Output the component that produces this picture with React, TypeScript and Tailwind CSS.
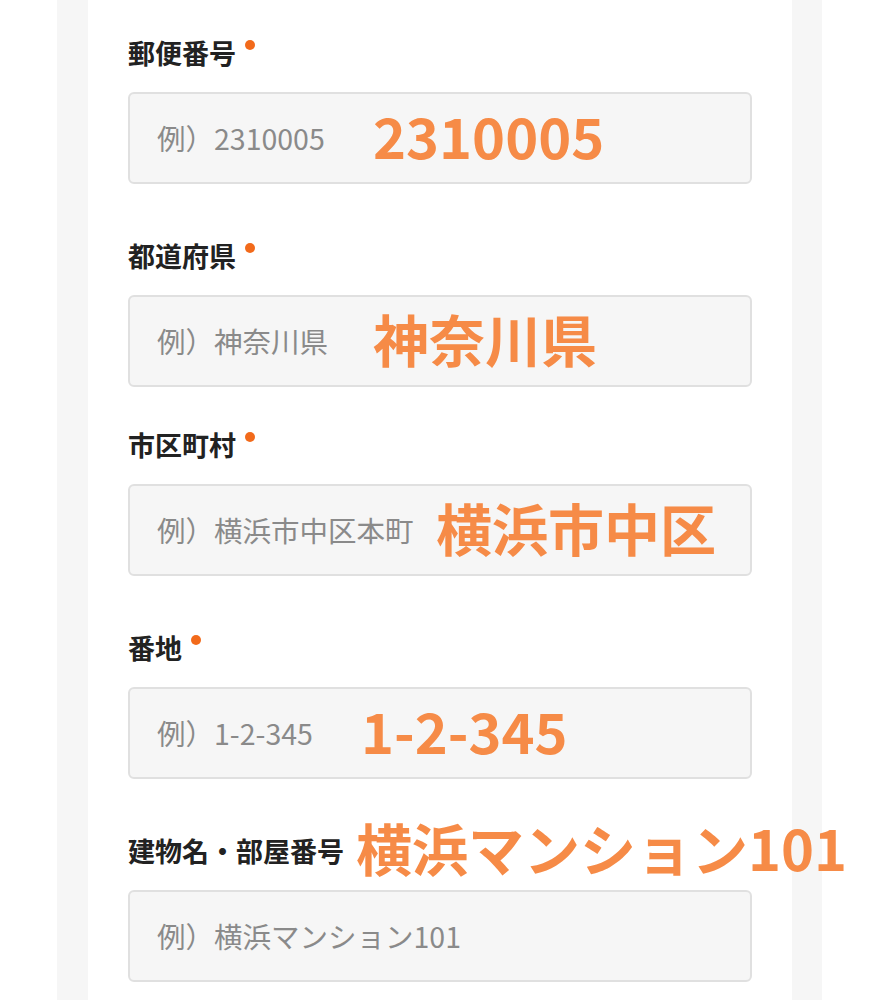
import React from 'react';

type Field = {
  label: string;
  required: boolean;
  placeholder: string;
  note: string;
  noteLeft: string;
  onLabel?: boolean;
  top: string;
};

const fields: Field[] = [
  { label: '郵便番号', required: true, placeholder: '例）2310005', note: '2310005', noteLeft: 'left-[243px]', top: 'mt-0' },
  { label: '都道府県', required: true, placeholder: '例）神奈川県', note: '神奈川県', noteLeft: 'left-[243px]', top: 'mt-[51px]' },
  { label: '市区町村', required: true, placeholder: '例）横浜市中区本町', note: '横浜市中区', noteLeft: 'left-[306px]', top: 'mt-[37px]' },
  { label: '番地', required: true, placeholder: '例）1-2-345', note: '1-2-345', noteLeft: 'left-[231px]', top: 'mt-[51px]' },
  { label: '建物名・部屋番号', required: false, placeholder: '例）横浜マンション101', note: '横浜マンション101', noteLeft: 'left-[228px]', onLabel: true, top: 'mt-[51px]' },
];

const noteClass =
  'absolute top-1/2 -translate-y-[56%] whitespace-nowrap text-[56px] font-bold leading-none text-[#f68b47]';

const App: React.FC = () => {
  return (
    <div
      className="min-h-screen bg-white"
      style={{ fontFamily: '"Noto Sans CJK JP", "Noto Sans", sans-serif' }}
    >
      <div className="ml-[57px] w-[765px] min-h-screen bg-[#f6f6f6] pl-[31px] pr-[30px]">
        <div className="w-[704px] min-h-screen bg-white px-[40px] pt-[32px] pb-10">
          {fields.map((f) => (
            <div key={f.label} className={f.top}>
              <div className="relative flex h-[40px] items-center">
                <span className="text-[27px] font-bold leading-none text-[#222]">{f.label}</span>
                {f.required && (
                  <span className="mb-[14px] ml-[9px] h-[10px] w-[10px] rounded-full bg-[#f26a1b]" />
                )}
                {f.onLabel && <span className={`${noteClass} ${f.noteLeft}`}>{f.note}</span>}
              </div>
              <div className="relative mt-[20px] flex h-[92px] items-center rounded-[6px] border-2 border-[#e0e0e0] bg-[#f6f6f6] px-[27px]">
                <span className="text-[28.5px] leading-none text-[#8a8a8a]">{f.placeholder}</span>
                {!f.onLabel && <span className={`${noteClass} ${f.noteLeft}`}>{f.note}</span>}
              </div>
            </div>
          ))}
        </div>
      </div>
    </div>
  );
};

export default App;
